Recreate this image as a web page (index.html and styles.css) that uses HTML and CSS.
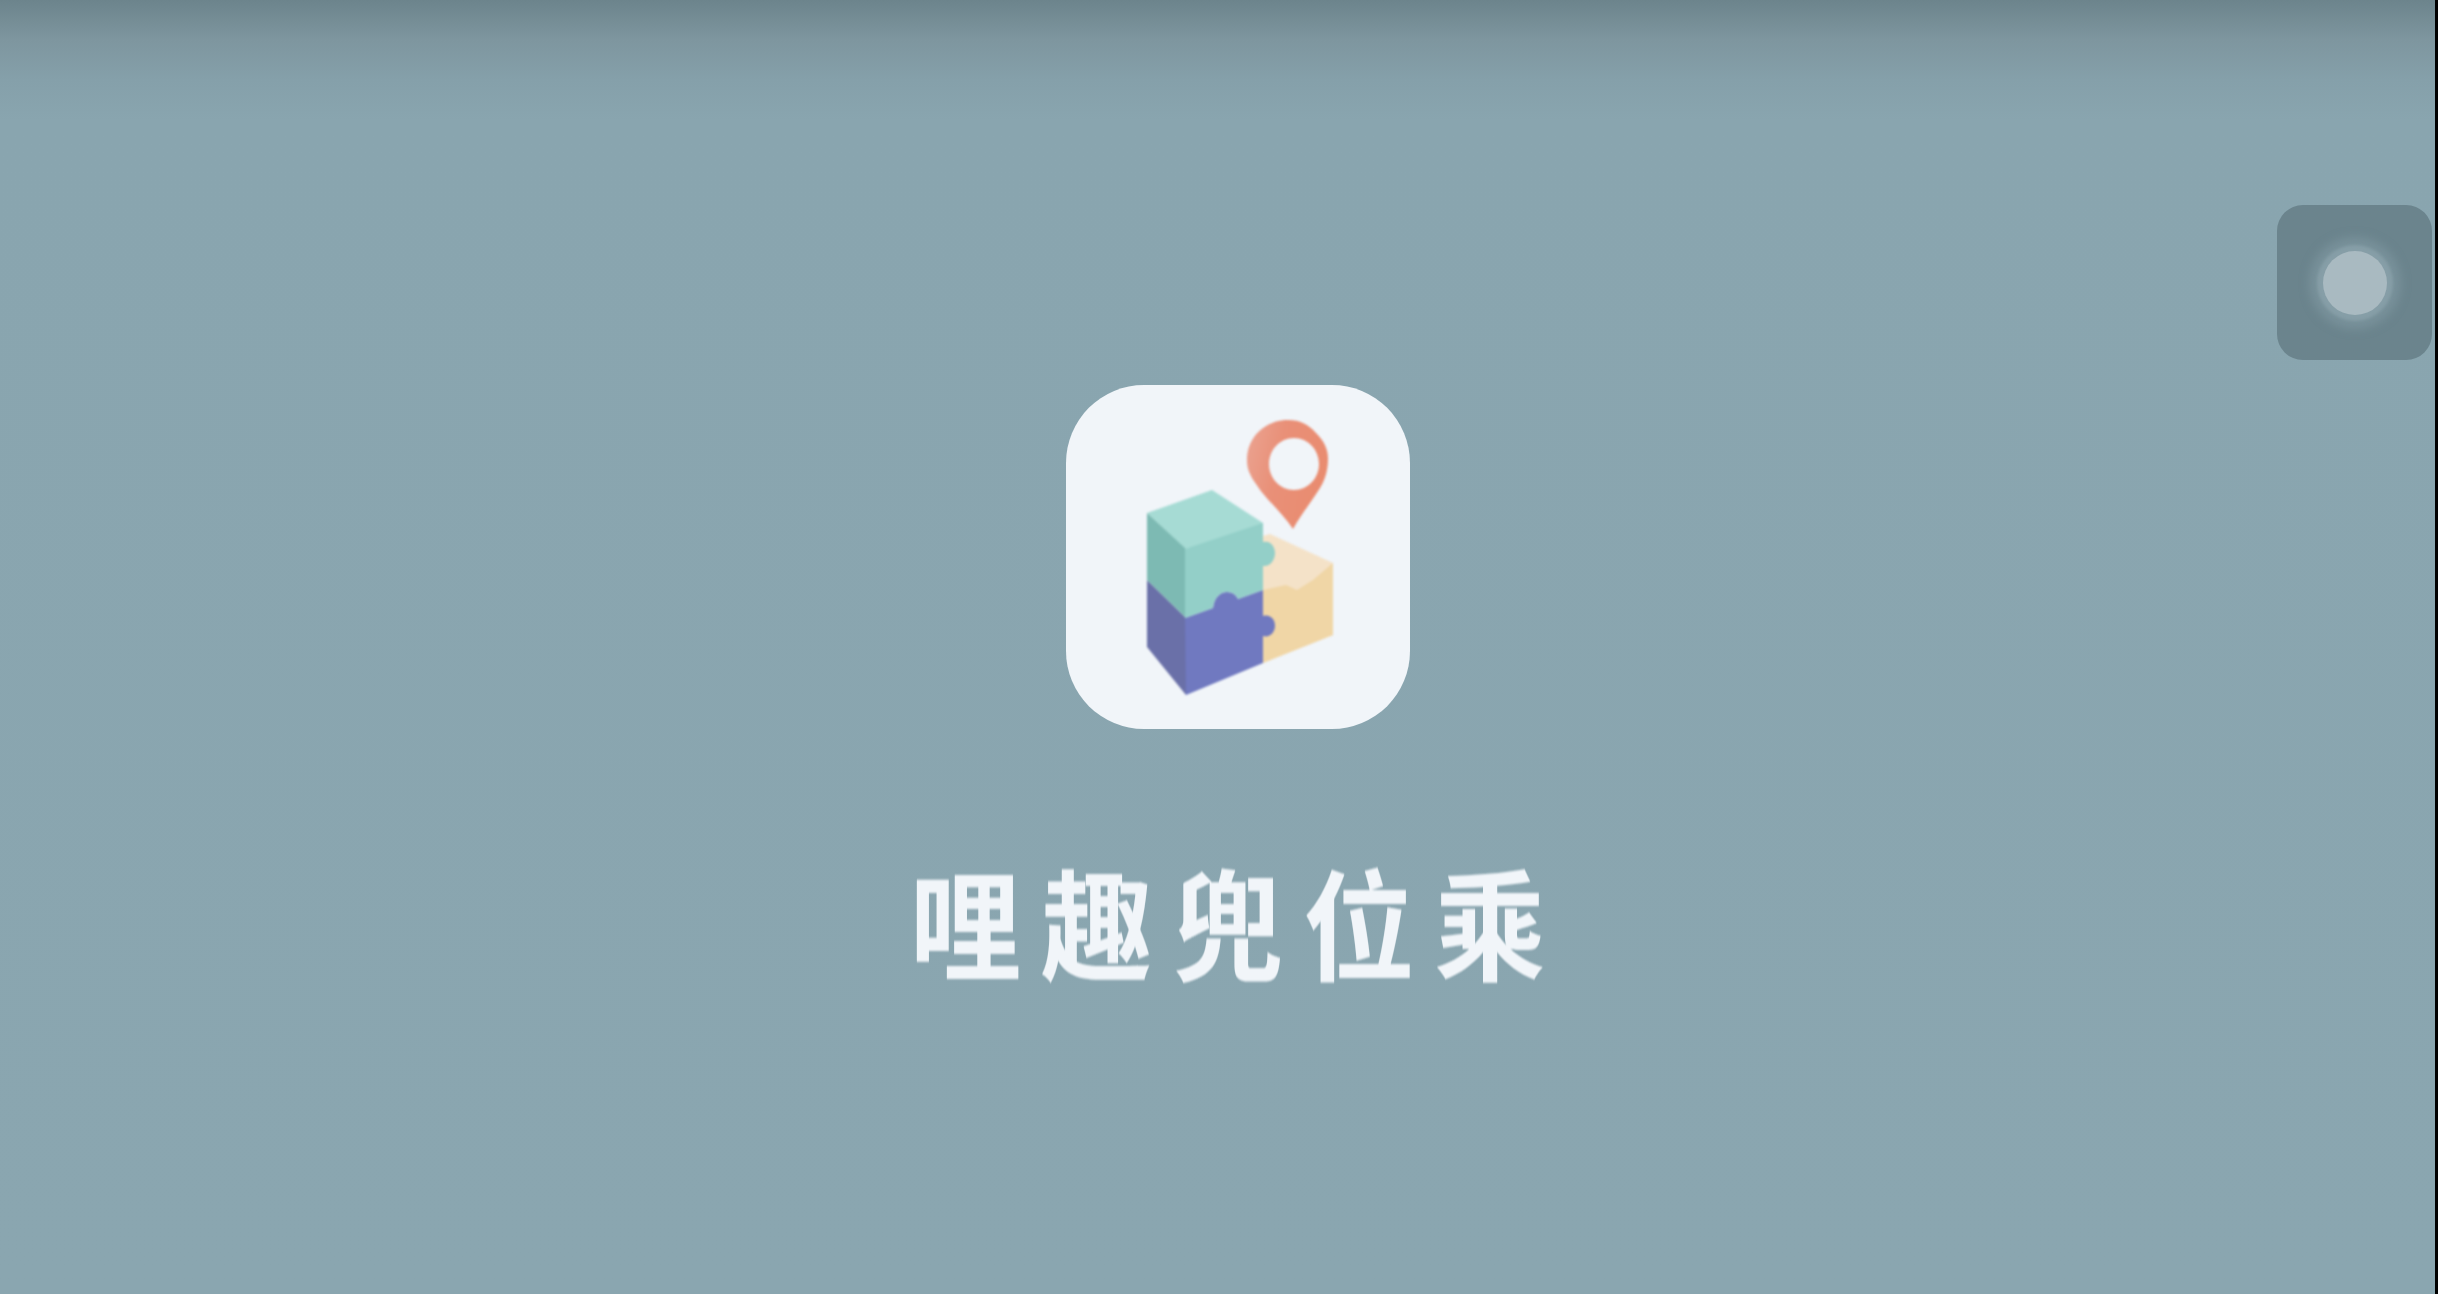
FILE: index.html
```html
<!DOCTYPE html>
<html lang="zh">
<head>
<meta charset="utf-8">
<title>哩趣兜位乘</title>
<link rel="stylesheet" href="styles.css">
</head>
<body>
<main class="screen">
  <div class="splash">
    <div class="app-icon">
      <svg class="logo" viewBox="16 15 344 344" xmlns="http://www.w3.org/2000/svg">
        <defs>
          <linearGradient id="pinShade" x1="0" y1="0" x2="1" y2="0.3">
            <stop offset="0" stop-color="#eba492"/>
            <stop offset="0.45" stop-color="#e99078"/>
            <stop offset="1" stop-color="#e98c70"/>
          </linearGradient>
        </defs>
        <!-- tan block -->
        <path fill="#f4e2c8" d="M220 164 L283 193 L283 265 L213 293 L213 166 Z"/>
        <path fill="#f0d6a6" d="M213 220 L236 215 L247 220 L263 210 L283 193 L283 265 L213 293 Z"/>
        <!-- purple block -->
        <path fill="#6a70a8" d="M97 210 L136 248 L136 325 L97 277 Z"/>
        <path fill="#7079c0" d="M135 248 L163 238 C164 228 170 222 177 222 C183 222 186 225 188 229 L213 220 L213 246 C221 244 225 250 225 256 C225 262 220 268 213 266 L213 293 L136 325 Z"/>
        <!-- teal block -->
        <path fill="#a6dbd4" d="M97 143 L162 120 L213 153 L213 165 L135 179 Z"/>
        <path fill="#7dbab3" d="M97 143 L136 179 L136 248 L97 210 Z"/>
        <path fill="#93cfc8" d="M135 179 L213 153 L213 172 C221 170 225 177 225 183 C225 190 220 197 213 196 L213 220 L188 229 C186 225 183 222 177 222 C170 222 164 228 163 238 L135 248 Z"/>
        <!-- pin -->
        <path fill="url(#pinShade)" fill-rule="evenodd" d="M243 159 C232 142 216 130 206 114 C199 104 197 98 197 90 C197 66 216 50 238 50 C250 50 258 54 266 63 C274 71 278 79 278 89 C278 100 275 110 270 118 C262 131 250 146 243 159 Z M244 68 C230 68 219 80 219 94 C219 108 230 120 244 120 C258 120 269 108 269 94 C269 80 258 68 244 68 Z"/>
      </svg>
    </div>
    <h1 class="app-name">哩趣兜位乘</h1>
  </div>
  <div class="float-ball"><span class="float-dot"></span></div>
</main>
</body>
</html>
```
FILE: styles.css
```css
* { box-sizing: border-box; }
html, body { margin: 0; height: 100%; }
body {
  overflow: hidden;
  background: #000;
  font-family: "Noto Sans CJK SC", "Noto Sans CJK TC", sans-serif;
}
.screen {
  position: relative;
  width: 2435px;
  height: 100%;
  background: linear-gradient(to bottom, #6c848c 0, #7e969f 40px, #85a0aa 80px, #89a5af 120px, #8aa6b0 100%);
}
.splash {
  display: flex;
  flex-direction: column;
  align-items: center;
  padding-top: 385px;
  padding-left: 40px;
}
.app-icon {
  width: 344px;
  height: 344px;
  border-radius: 78px;
  background: #f1f5f9;
  filter: blur(0.7px);
}
.logo {
  display: block;
  width: 100%;
  height: 100%;
  filter: blur(0.8px);
}
.app-name {
  margin: 126px 0 0;
  font-size: 120px;
  line-height: 130px;
  font-weight: 700;
  color: #f1f5f9;
  white-space: nowrap;
  letter-spacing: 21px;
  transform: scaleX(0.93);
  filter: blur(0.8px);
}
.float-ball {
  position: absolute;
  left: 2277px;
  top: 205px;
  width: 155px;
  height: 155px;
  border-radius: 26px;
  background: #6b848d;
  display: flex;
  align-items: center;
  justify-content: center;
  filter: blur(0.7px);
}
.float-dot {
  width: 64px;
  height: 64px;
  border-radius: 50%;
  background: #a9bac1;
  box-shadow: 0 0 3px 6px #869ea7, 0 0 10px 14px rgba(128,152,161,.65);
}
```
